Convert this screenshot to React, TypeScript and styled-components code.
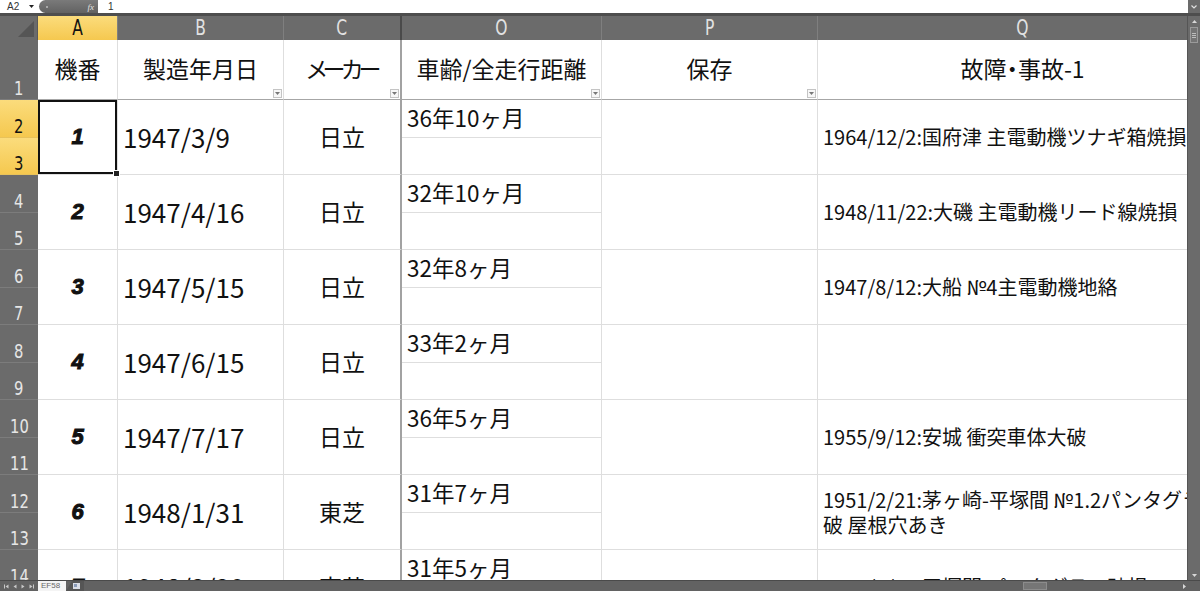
import styled, { createGlobalStyle } from 'styled-components'

const GRID = '#dedede'
const HEAD = '#6b6b6b'
const GOLD = 'linear-gradient(#fbdc7c, #f5c84f)'
const JP = '"Noto Sans CJK JP", "Noto Sans", sans-serif'
const NARROW = '"Liberation Sans Narrow", "DejaVu Sans Condensed", "Liberation Sans", Arial, sans-serif'

const GlobalStyle = createGlobalStyle`
  html, body {
    margin: 0;
    padding: 0;
    background: #fff;
  }
  body {
    font-family: ${JP};
    overflow: hidden;
  }
`

type Entry = {
  no: number
  date: string
  maker: string
  age: string
  notes: string[]
}

const entries: Entry[] = [
  { no: 1, date: '1947/3/9', maker: '日立', age: '36年10ヶ月', notes: ['1964/12/2:国府津 主電動機ツナギ箱焼損'] },
  { no: 2, date: '1947/4/16', maker: '日立', age: '32年10ヶ月', notes: ['1948/11/22:大磯 主電動機リード線焼損'] },
  { no: 3, date: '1947/5/15', maker: '日立', age: '32年8ヶ月', notes: ['1947/8/12:大船 №4主電動機地絡'] },
  { no: 4, date: '1947/6/15', maker: '日立', age: '33年2ヶ月', notes: [] },
  { no: 5, date: '1947/7/17', maker: '日立', age: '36年5ヶ月', notes: ['1955/9/12:安城 衝突車体大破'] },
  { no: 6, date: '1948/1/31', maker: '東芝', age: '31年7ヶ月', notes: ['1951/2/21:茅ヶ崎-平塚間 №1.2パンタグラフ大', '破 屋根穴あき'] },
  { no: 7, date: '1948/2/20', maker: '東芝', age: '31年5ヶ月', notes: ['1950/1/26:平塚間 パンタグラフ破損'] },
]

const columns = [
  { letter: 'A', title: '機番', filter: false, tight: false },
  { letter: 'B', title: '製造年月日', filter: true, tight: false },
  { letter: 'C', title: 'メーカー', filter: true, tight: true },
  { letter: 'O', title: '車齢/全走行距離', filter: true, tight: false },
  { letter: 'P', title: '保存', filter: true, tight: false },
  { letter: 'Q', title: '故障・事故-1', filter: false, tight: false },
]

const Window = styled.div`
  width: 1200px;
  height: 591px;
  display: flex;
  flex-direction: column;
  overflow: hidden;
`

/* formula bar */
const FormulaBar = styled.div`
  flex: none;
  height: 13px;
  display: flex;
  align-items: center;
  border-bottom: 3px solid #4e4e4e;
  font-family: "Liberation Sans", Arial, sans-serif;
  font-size: 10px;
  color: #333;
`

const NameBox = styled.div`
  width: 22px;
  padding-left: 7px;
`

const NameArrow = styled.div`
  width: 10px;
  display: flex;
  align-items: center;
`

const FxBox = styled.div`
  width: 59px;
  height: 13px;
  box-sizing: border-box;
  display: flex;
  align-items: center;
  justify-content: space-between;
  padding: 0 4px 0 7px;
  border-radius: 7px 0 0 7px;
  background: linear-gradient(#7a7a7a, #626262);
  color: #e4e4e4;
  font: italic 9px "Liberation Serif", serif;
`

const Dot = styled.span`
  width: 2px;
  height: 2px;
  border-radius: 50%;
  background: #bdbdbd;
`

const FormulaText = styled.div`
  flex: 1;
  padding-left: 10px;
`

const ExpandButton = styled.div`
  width: 12px;
  height: 13px;
  display: flex;
  align-items: center;
  justify-content: center;
  background: ${HEAD};
`

/* body */
const Body = styled.div`
  flex: 1;
  min-height: 0;
  display: flex;
`

const Sheet = styled.div`
  flex: 1;
  min-width: 0;
  overflow: hidden;
  display: grid;
  grid-template-columns: 38px 80px 166px 118px 200px 216px 410px;
  grid-template-rows: 24px 60px repeat(14, 37.5px);
  grid-auto-flow: row;
  align-content: start;
`

const Corner = styled.div`
  background: ${HEAD};
  border-right: 1px solid #5a5a5a;
  display: flex;
  align-items: flex-end;
  justify-content: flex-end;
  padding: 0 3px 3px 0;
`

const ColHead = styled.div<{ $active?: boolean; $thick?: boolean }>`
  background: ${p => (p.$active ? GOLD : HEAD)};
  color: ${p => (p.$active ? '#111' : '#e2e2e2')};
  border-right: ${p => (p.$thick ? '2px solid #4a4a4a' : '1px solid #7f7f7f')};
  display: flex;
  align-items: center;
  justify-content: center;
  font-family: ${NARROW};
  font-size: 21px;
  line-height: 1;
`

const RowHead = styled.div<{ $active?: boolean }>`
  background: ${p => (p.$active ? GOLD : HEAD)};
  color: ${p => (p.$active ? '#111' : '#e6e6e6')};
  border-bottom: 1px solid ${p => (p.$active ? '#e8c25a' : '#7c7c7c')};
  display: flex;
  align-items: flex-end;
  justify-content: center;
  padding-bottom: 1px;
  font-family: ${NARROW};
  font-size: 20px;
  line-height: 1;
`

const Narrow = styled.span`
  display: inline-block;
  transform: scaleX(0.82);
`

const HeadCell = styled.div<{ $thick?: boolean; $tight?: boolean }>`
  position: relative;
  display: flex;
  align-items: center;
  justify-content: center;
  border-right: ${p => (p.$thick ? '2px solid #a2a2a2' : `1px solid ${GRID}`)};
  border-bottom: 1px solid #a6a6a6;
  font-size: 23px;
  font-feature-settings: "palt";
  letter-spacing: ${p => (p.$tight ? '-4px' : '0')};
  color: #111;
  white-space: nowrap;
  padding-bottom: 4px;
`

const FilterButton = styled.span`
  position: absolute;
  right: 1px;
  bottom: 1px;
  width: 9px;
  height: 9px;
  box-sizing: border-box;
  border: 1px solid #c4c4c4;
  background: #f7f7f7;
  display: flex;
  align-items: center;
  justify-content: center;
`

const Cell = styled.div<{ $span?: number; $align?: 'left' | 'center'; $thick?: boolean; $selected?: boolean }>`
  position: relative;
  grid-row: span ${p => p.$span ?? 1};
  display: flex;
  flex-direction: column;
  justify-content: center;
  align-items: ${p => (p.$align === 'center' ? 'center' : 'flex-start')};
  padding-left: ${p => (p.$align === 'center' ? 0 : 5)}px;
  border-right: ${p => (p.$thick ? '2px solid #a2a2a2' : `1px solid ${GRID}`)};
  border-bottom: 1px solid ${GRID};
  box-shadow: ${p => (p.$selected ? 'inset 0 0 0 2px #111' : 'none')};
  color: #111;
  white-space: nowrap;
  overflow: ${p => (p.$selected ? 'visible' : 'hidden')};
  z-index: ${p => (p.$selected ? 2 : 'auto')};
`

const FillHandle = styled.span`
  position: absolute;
  right: -3px;
  bottom: -3px;
  width: 5px;
  height: 5px;
  background: #222;
  border: 1px solid #fff;
`

const NumberCell = styled(Cell)`
  font-family: "Liberation Sans", Arial, sans-serif;
  font-weight: 900;
  font-style: italic;
  font-size: 22px;
  -webkit-text-stroke: 1px #111;
`

const DateCell = styled(Cell)`
  font-size: 26px;
  padding-bottom: 2px;
`

const MakerCell = styled(Cell)`
  font-size: 23px;
  padding-bottom: 2px;
`

const AgeCell = styled(Cell)`
  font-size: 22.5px;
  padding-bottom: 2px;
`

const NoteCell = styled(Cell)`
  font-size: 20px;
  line-height: 25px;
  padding-bottom: 1px;
`

/* scroll bars */
const VScroll = styled.div`
  flex: none;
  width: 12px;
  background: ${HEAD};
  display: flex;
  flex-direction: column;
  align-items: center;
  border-left: 1px solid #555;
`

const ScrollArrow = styled.div`
  height: 10px;
  display: flex;
  align-items: center;
  justify-content: center;
`

const VThumb = styled.div`
  width: 8px;
  height: 16px;
  margin-top: 1px;
  box-sizing: border-box;
  border: 1px solid #9a9a9a;
  background: #747474;
  display: flex;
  flex-direction: column;
  align-items: center;
  justify-content: center;
  gap: 1px;
`

const Grip = styled.span`
  width: 4px;
  height: 1px;
  background: #bdbdbd;
`

const Spacer = styled.div`
  flex: 1;
`

const BottomBar = styled.div`
  flex: none;
  height: 10px;
  display: flex;
  align-items: stretch;
  background: #626262;
  border-top: 1px solid #4a4a4a;
  font-family: "Liberation Sans", Arial, sans-serif;
`

const SheetNav = styled.div`
  width: 38px;
  display: flex;
  align-items: center;
  justify-content: space-around;
  padding: 0 2px;
  box-sizing: border-box;
`

const SheetTab = styled.div`
  width: 28px;
  background: #f4f4f4;
  color: #6a6a6a;
  font-size: 8px;
  line-height: 10px;
  padding-left: 3px;
  box-sizing: border-box;
`

const HTrack = styled.div`
  width: 160px;
  display: flex;
  align-items: center;
`

const HThumb = styled.div`
  width: 24px;
  height: 8px;
  margin-right: 4px;
  box-sizing: border-box;
  border: 1px solid #8c8c8c;
  background: #767676;
`

const Down = ({ color = '#d8d8d8' }: { color?: string }) => (
  <svg width="5" height="3" viewBox="0 0 5 3">
    <path d="M0 0h5L2.5 3z" fill={color} />
  </svg>
)

const Up = () => (
  <svg width="5" height="3" viewBox="0 0 5 3">
    <path d="M0 3h5L2.5 0z" fill="#d8d8d8" />
  </svg>
)

const NavArrow = ({ flip, bar }: { flip?: boolean; bar?: boolean }) => (
  <svg width="5" height="5" viewBox="0 0 5 5" style={{ transform: flip ? 'scaleX(-1)' : undefined }}>
    {bar && <rect x="0" y="0.5" width="1" height="4" fill="#c8c8c8" />}
    <path d="M4.5 0.5v4L1.5 2.5z" fill="#c8c8c8" />
  </svg>
)

const App = () => (
  <Window>
    <GlobalStyle />
    <FormulaBar>
      <NameBox>A2</NameBox>
      <NameArrow>
        <Down color="#222" />
      </NameArrow>
      <FxBox>
        <Dot />
        <span>fx</span>
      </FxBox>
      <FormulaText>1</FormulaText>
      <ExpandButton>
        <svg width="6" height="4" viewBox="0 0 6 4">
          <path d="M0.5 0.5L3 3L5.5 0.5" stroke="#e0e0e0" strokeWidth="1.2" fill="none" />
        </svg>
      </ExpandButton>
    </FormulaBar>

    <Body>
      <Sheet>
        <Corner>
          <svg width="16" height="16" viewBox="0 0 16 16">
            <path d="M16 0V16H0z" fill="#555" />
          </svg>
        </Corner>
        {columns.map(c => (
          <ColHead key={c.letter} $active={c.letter === 'A'} $thick={c.letter === 'C'}>
            <Narrow>{c.letter}</Narrow>
          </ColHead>
        ))}

        <RowHead>
          <Narrow>1</Narrow>
        </RowHead>
        {columns.map(c => (
          <HeadCell key={c.letter} $thick={c.letter === 'C'} $tight={c.tight}>
            {c.title}
            {c.filter && (
              <FilterButton>
                <Down color="#777" />
              </FilterButton>
            )}
          </HeadCell>
        ))}

        {entries.map((e, i) => {
          const top = 2 + i * 2
          const active = i === 0
          return [
            <RowHead key={`h${top}`} $active={active}>
              <Narrow>{top}</Narrow>
            </RowHead>,
            <NumberCell key={`a${top}`} $span={2} $align="center" $selected={active}>
              {e.no}
              {active && <FillHandle />}
            </NumberCell>,
            <DateCell key={`b${top}`} $span={2}>{e.date}</DateCell>,
            <MakerCell key={`c${top}`} $span={2} $align="center" $thick>{e.maker}</MakerCell>,
            <AgeCell key={`o${top}`}>{e.age}</AgeCell>,
            <Cell key={`p${top}`} $span={2} />,
            <NoteCell key={`q${top}`} $span={2}>
              {e.notes.map(n => (
                <span key={n}>{n}</span>
              ))}
            </NoteCell>,
            <RowHead key={`h${top + 1}`} $active={active}>
              <Narrow>{top + 1}</Narrow>
            </RowHead>,
            <AgeCell key={`o${top + 1}`} />,
          ]
        })}
      </Sheet>

      <VScroll>
        <ScrollArrow>
          <Up />
        </ScrollArrow>
        <VThumb>
          <Grip />
          <Grip />
          <Grip />
        </VThumb>
        <Spacer />
        <ScrollArrow>
          <Down />
        </ScrollArrow>
      </VScroll>
    </Body>

    <BottomBar>
      <SheetNav>
        <NavArrow bar />
        <NavArrow />
        <NavArrow flip />
        <NavArrow flip bar />
      </SheetNav>
      <SheetTab>EF58</SheetTab>
      <svg width="18" height="10" viewBox="0 0 18 10">
        <path d="M0 10L6 0H18V10z" fill="#555" />
        <rect x="7" y="2" width="7" height="6" fill="#d9dde6" />
        <rect x="8" y="3" width="3" height="3" fill="#8a9bb8" />
      </svg>
      <Spacer />
      <HTrack>
        <HThumb />
      </HTrack>
      <ScrollArrow>
        <svg width="3" height="5" viewBox="0 0 3 5">
          <path d="M0 0v5l3-2.5z" fill="#d8d8d8" />
        </svg>
      </ScrollArrow>
      <div style={{ width: 14 }} />
    </BottomBar>
  </Window>
)

export default App
